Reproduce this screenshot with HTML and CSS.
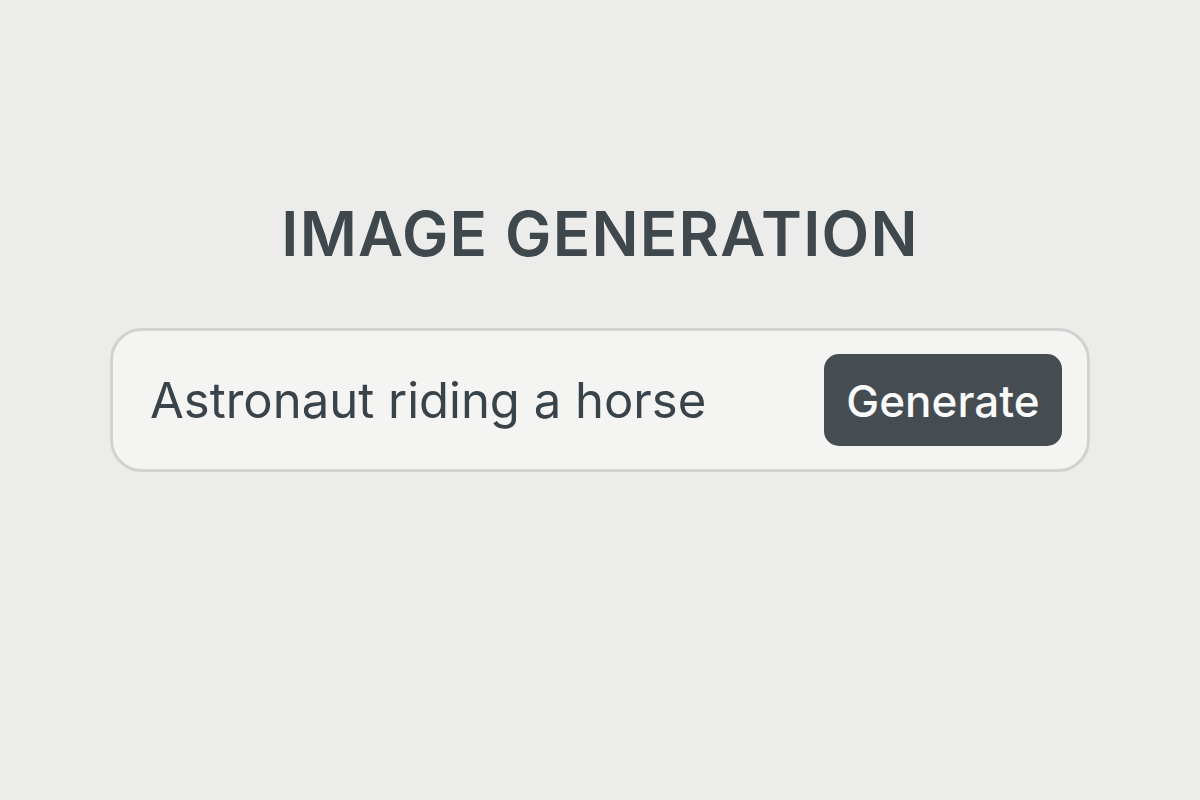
FILE: index.html
```html
<!DOCTYPE html>
<html lang="en">
<head>
<meta charset="utf-8">
<title>Image Generation</title>
<link rel="stylesheet" href="styles.css">
</head>
<body>
<main class="page">
  <h1 class="title">IMAGE GENERATION</h1>
  <form class="search">
    <span class="prompt">Astronaut riding a horse</span>
    <button type="button" class="btn">Generate</button>
  </form>
</main>
</body>
</html>
```
FILE: styles.css
```css
html, body {
  margin: 0;
  padding: 0;
  height: 100%;
}
body {
  background: #ececeb;
  font-family: Inter, "Noto Sans", sans-serif;
  color: #3e474c;
}
.page {
  display: flex;
  flex-direction: column;
  align-items: center;
  padding-top: 196px;
}
.title {
  margin: 0;
  font-size: 62px;
  font-weight: 600;
  letter-spacing: 1.2px;
  line-height: 76px;
  color: #3f484d;
}
.search {
  margin-top: 56px;
  box-sizing: border-box;
  width: 980px;
  height: 144px;
  border: 3px solid #d2d2d1;
  border-radius: 32px;
  background: #f4f4f3;
  display: flex;
  align-items: center;
  justify-content: space-between;
  padding: 0 25px 0 37px;
}
.prompt {
  font-size: 49px;
  font-weight: 400;
  color: #39434a;
  padding-top: 1px;
}
.btn {
  width: 238px;
  height: 92px;
  border: none;
  border-radius: 15px;
  background: #454d52;
  color: #fafafa;
  font-family: Inter, "Noto Sans", sans-serif;
  font-size: 44px;
  font-weight: 500;
  padding: 2px 0 0;
}
```
